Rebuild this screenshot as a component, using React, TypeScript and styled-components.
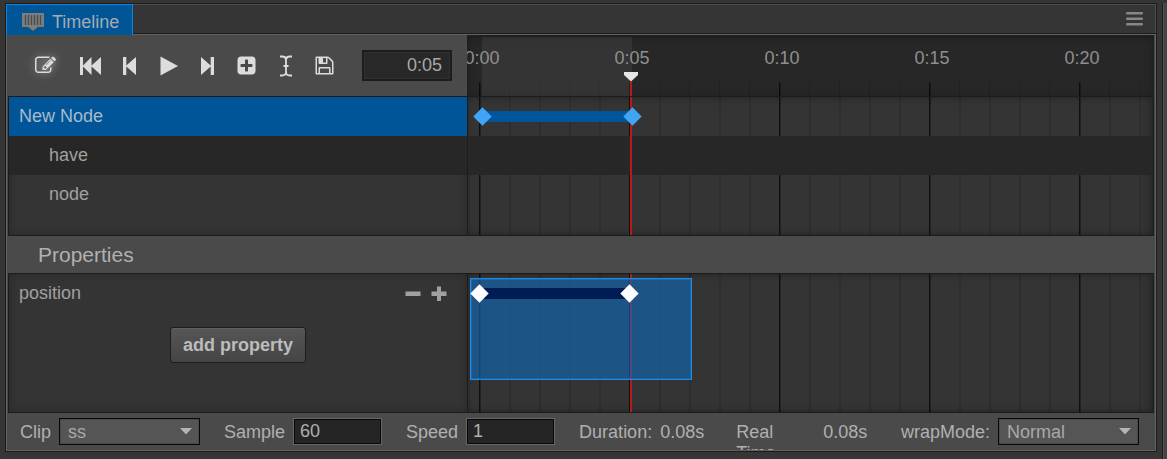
import React from "react";
import styled, { createGlobalStyle, css } from "styled-components";

const FRAME = 30;
const ORIGIN = 12;
const frameX = (frame: number) => ORIGIN + frame * FRAME;

const GlobalStyle = createGlobalStyle`
  * { box-sizing: border-box; }
  body {
    margin: 0;
    background: #353535;
    color: #a9a9a9;
    font-family: "Liberation Sans", Arial, sans-serif;
    font-size: 18px;
    line-height: 21px;
  }
  button, input, select { font: inherit; color: inherit; margin: 0; }
  ul { margin: 0; padding: 0; list-style: none; }
`;

const Shell = styled.div`
  display: flex;
  gap: 5px;
  padding: 3px 0 0 5px;
  min-height: 100vh;
  overflow: hidden;
`;

const Panel = styled.main`
  flex: 1;
  min-width: 0;
  align-self: flex-start;
  border: 1px solid #1c1c1c;
`;

const NeighbourPanel = styled.aside`
  flex: none;
  width: 5px;
  border-left: 1px solid #1c1c1c;
  background: linear-gradient(90deg, #555 1px, #444 1px);
`;

const TabBar = styled.div`
  display: flex;
  height: 30px;
  background: #353535;
  border-bottom: 1px solid #1c1c1c;
  box-shadow: inset 0 1px #4f4f4f, inset -1px 0 #4f4f4f;
`;

const Tab = styled.button`
  display: flex;
  align-items: center;
  gap: 8px;
  height: 31px;
  width: 127px;
  padding: 5px 0 0 15px;
  border: 1px solid #0a84e0;
  border-bottom: 0;
  background: #005596;
  color: #a5abb0;
  z-index: 1;
`;

const MenuButton = styled.button`
  display: flex;
  align-items: center;
  margin-left: auto;
  padding: 1px 13px 0 0;
  border: 0;
  background: none;
  color: #888;
`;

const Body = styled.div`
  border: 1px solid #626262;
  padding: 0 1px;
  background: #4a4a4a;
`;

const Split = styled.div`
  display: grid;
  grid-template-columns: 459px minmax(0, 1fr);
`;

const Toolbar = styled.div`
  display: flex;
  align-items: center;
  padding: 0 15px 0 18px;
  height: 61px;
`;

const ToolButton = styled.button<{ $active?: boolean }>`
  display: flex;
  justify-content: center;
  align-items: center;
  flex: none;
  width: 39px;
  height: 40px;
  padding: 0;
  border: 0;
  background: none;
  color: #dcdcdc;
  ${(p) =>
    p.$active &&
    css`
      margin-right: 6px;
      svg {
        filter: drop-shadow(0 0 4px rgba(255, 255, 255, 0.55));
      }
    `}
`;

const TimeInput = styled.input`
  width: 90px;
  height: 31px;
  margin-left: auto;
  padding: 0 8px;
  border: 2px solid #1d1d1d;
  background: #282828;
  box-shadow: inset 0 0 0 1px #303030;
  text-align: right;
`;

const Ruler = styled.div`
  position: relative;
  overflow: hidden;
  height: 61px;
  background:
    linear-gradient(90deg, #0c0c0c 1px, #1b1b1b 1px, #1b1b1b 2px, transparent 2px) 12px 100% / 150px 14px repeat-x,
    linear-gradient(90deg, #212121 1px, transparent 1px) 12px 100% / 30px 14px repeat-x,
    #272727;
  box-shadow: inset 0 2px 8px rgba(0, 0, 0, 0.35);
`;

const ClipRange = styled.div`
  position: absolute;
  top: 2px;
  bottom: 0;
  background: rgba(80, 80, 80, 0.32);
`;

const RulerLabels = styled.div`
  display: flex;
  margin-left: -60px;
  padding-top: 13px;
  color: #8f8f8f;
`;

const RulerLabel = styled.span`
  position: relative;
  flex: none;
  width: 150px;
  text-align: center;
`;

const Playhead = styled.svg`
  position: absolute;
  top: 37px;
`;

const PlayLine = styled.div`
  position: absolute;
  top: 0;
  bottom: 0;
  width: 2px;
  background: #b81a1a;
`;

const PlayStem = styled(PlayLine)`
  top: 47px;
`;

const Section = styled(Split)`
  border: 1px solid #1c1c1c;
  grid-template-columns: 458px minmax(0, 1fr);
  min-height: 140px;
  background: #343434;
`;

const List = styled.div<{ $inset?: boolean }>`
  padding-top: ${(p) => (p.$inset ? 1 : 0)}px;
  box-shadow: inset 0 0 10px rgba(0, 0, 0, 0.22);
`;

const Row = styled.li<{ $selected?: boolean; $dark?: boolean; $depth?: number }>`
  display: flex;
  align-items: center;
  height: 39px;
  padding: 0 20px 0 ${(p) => 10 + (p.$depth ?? 0) * 30}px;
  color: ${(p) => (p.$selected ? "#a9bac8" : "#a0a0a0")};
  background: ${(p) => (p.$selected ? "#005599" : p.$dark ? "#272727" : "transparent")};
`;

const Tracks = styled.div`
  position: relative;
  overflow: hidden;
  border-left: 1px solid #1c1c1c;
  background:
    linear-gradient(90deg, #101010 1px, #232323 1px, #232323 2px, transparent 2px) 11px 0 / 150px 100% repeat-x,
    linear-gradient(90deg, #2e2e2e 2px, transparent 2px) 11px 0 / 30px 100% repeat-x;
  box-shadow: inset -4px 0 8px rgba(0, 0, 0, 0.2), inset 0 0 5px rgba(0, 0, 0, 0.2);
`;

const Canvas = styled.div<{ $inset?: boolean }>`
  position: absolute;
  inset: 0 0 0 -1px;
  ${(p) => p.$inset && "--track-top: 1px;"}
`;

const TrackRow = styled.div<{ $dark?: boolean }>`
  height: 39px;
  background: ${(p) => (p.$dark ? "#272727" : "transparent")};
`;

const Segment = styled.div<{ $color: string }>`
  position: absolute;
  top: calc(14px + var(--track-top, 0px));
  height: 11px;
  background: ${(p) => p.$color};
`;

const Key = styled.div<{ $color: string }>`
  position: absolute;
  top: calc(13px + var(--track-top, 0px));
  width: 13px;
  height: 13px;
  margin-left: -6px;
  background: ${(p) => p.$color};
  transform: rotate(45deg);
`;

const Selection = styled.div`
  position: absolute;
  left: 3px;
  top: 4px;
  width: 222px;
  height: 102px;
  border: 1px solid #1e8be6;
  background: rgba(16, 104, 184, 0.62);
  box-shadow: inset 0 0 0 1px rgba(30, 139, 230, 0.35);
`;

const SectionTitle = styled.h2`
  margin: 0;
  padding: 1px 30px 0;
  font-size: 21px;
  font-weight: 400;
  line-height: 36px;
  color: #b0b0b0;
`;

const RowActions = styled.span`
  display: flex;
  gap: 10px;
  margin-left: auto;
`;

const SmallButton = styled.button`
  display: flex;
  padding: 0;
  border: 0;
  background: none;
  color: #a0a0a0;
`;

const AddButton = styled.button`
  display: block;
  width: 136px;
  height: 36px;
  margin: 14px auto 0;
  padding: 0;
  border: 1px solid #1c1c1c;
  border-radius: 3px;
  background: linear-gradient(#565656, #454545);
  box-shadow: inset 0 1px #606060;
  color: #bcbcbc;
  font-weight: 700;
`;

const Footer = styled.footer`
  display: flex;
  gap: 24px;
  height: 37px;
  padding: 5px 15px 0 12px;
  overflow: hidden;
  color: #b0b0b0;
`;

const Field = styled.label<{ $end?: boolean }>`
  display: flex;
  gap: 8px;
  flex: none;
  line-height: 21px;
  ${(p) => p.$end && "margin-left: auto;"}
`;

const Caption = styled.span<{ $wide?: boolean }>`
  padding-top: 4px;
  ${(p) => p.$wide && "width: 79px;"}
`;

const Value = styled.output`
  padding-top: 4px;
  min-width: 52px;
`;

const NumberInput = styled.input`
  width: 89px;
  height: 27px;
  padding: 0 6px;
  border: 1px solid #666;
  background: #252525;
  box-shadow: inset 0 0 0 1px #080808;
`;

const SelectBox = styled.span`
  display: grid;
  width: 141px;
  height: 27px;
  align-items: center;
  > * { grid-area: 1 / 1; }
  svg { justify-self: end; margin-right: 8px; pointer-events: none; z-index: 1; }
`;

const Select = styled.select`
  appearance: none;
  width: 100%;
  height: 27px;
  padding: 1px 8px 0;
  border: 1px solid #080808;
  border-radius: 0;
  background: #555;
  box-shadow: inset 0 0 0 1px #4a4a4a;
  color: #a9a9a9;
`;

const Glyph = ({ d }: { d: string }) => (
  <svg width="21" height="21" viewBox="0 0 1792 1792" fill="currentColor" aria-hidden="true">
    <path d={d} />
  </svg>
);

const Shape = ({ w, h = 20, children }: { w: number; h?: number; children: React.ReactNode }) => (
  <svg width={w} height={h} viewBox={`0 0 ${w} ${h}`} fill="currentColor" aria-hidden="true">
    {children}
  </svg>
);

const EDIT =
  "M888 1184l116-116-152-152-116 116v56h96v96h56zm440-720q-16-16-33 1l-350 350q-17 17-1 33t33-1l350-350q17-17 1-33zm80 594v190q0 119-84.5 203.5t-203.5 84.5h-832q-119 0-203.5-84.5t-84.5-203.5v-832q0-119 84.5-203.5t203.5-84.5h832q63 0 117 25 15 7 18 23 3 17-9 29l-49 49q-14 14-32 8-23-6-45-6h-832q-66 0-113 47t-47 113v832q0 66 47 113t113 47h832q66 0 113-47t47-113v-126q0-13 9-22l64-64q15-15 35-7t20 29zm-96-738l288 288-672 672h-288v-288zm444 132l-92 92-288-288 92-92q28-28 68-28t68 28l152 152q28 28 28 68t-28 68z";
const PLUS_BOX =
  "M1408 960v-128q0-26-19-45t-45-19h-320v-320q0-26-19-45t-45-19h-128q-26 0-45 19t-19 45v320h-320q-26 0-45 19t-19 45v128q0 26 19 45t45 19h320v320q0 26 19 45t45 19h128q26 0 45-19t19-45v-320h320q26 0 45-19t19-45zm256-544v960q0 119-84.5 203.5t-203.5 84.5h-960q-119 0-203.5-84.5t-84.5-203.5v-960q0-119 84.5-203.5t203.5-84.5h960q119 0 203.5 84.5t84.5 203.5z";
const FLOPPY =
  "M512 1536h768v-384h-768v384zm896 0h128v-896q0-14-10-38.5t-20-34.5l-281-281q-10-10-34-20t-39-10v416q0 40-28 68t-68 28h-576q-40 0-68-28t-28-68v-416h-128v1280h128v-416q0-40 28-68t68-28h832q40 0 68 28t28 68v416zm-384-928v-320q0-13-9.5-22.5t-22.5-9.5h-192q-13 0-22.5 9.5t-9.5 22.5v320q0 13 9.5 22.5t22.5 9.5h192q13 0 22.5-9.5t9.5-22.5zm640 32v928q0 40-28 68t-68 28h-1344q-40 0-68-28t-28-68v-1344q0-40 28-68t68-28h928q40 0 88 20t76 48l280 280q28 28 48 76t20 88z";

const TimelineIcon = () => (
  <svg width="22" height="20" viewBox="0 0 22 20" aria-hidden="true">
    <path d="M1 2h20v12.500h-5l-5 4-5-4H1z" fill="#35424c" />
    <path d="M0 0h22v14h-6l-5 4-5-4H0z" fill="#7d7d7d" />
    <path d="M3.500 2v10M6.500 2v10M9.500 2v10M12.500 2v10M15.500 2v10M18.500 2v10" stroke="#484c50" strokeWidth="1.300" />
  </svg>
);

const Dropdown = ({ value }: { value: string }) => (
  <SelectBox>
    <Select defaultValue={value}>
      <option>{value}</option>
    </Select>
    <svg width="12" height="7" viewBox="0 0 12 7" aria-hidden="true">
      <path d="M0 0h12L6 6.500z" fill="#b4b4b4" />
    </svg>
  </SelectBox>
);

const KeyTrack = ({ from, to, bar, dot, shift = 0 }: { from: number; to: number; bar: string; dot: string; shift?: number }) => (
  <>
    <Segment $color={bar} style={{ left: frameX(from) + shift, width: (to - from) * FRAME }} />
    <Key $color={dot} style={{ left: frameX(from) + shift }} />
    <Key $color={dot} style={{ left: frameX(to) + shift }} />
  </>
);

const marks = ["0:00", "0:05", "0:10", "0:15", "0:20"];
const current = 5;

export default function App() {
  return (
    <>
      <GlobalStyle />
      <Shell>
        <Panel>
          <TabBar>
            <Tab type="button">
              <TimelineIcon />
              Timeline
            </Tab>
            <MenuButton type="button" aria-label="Panel menu">
              <Shape w={17} h={14}>
                <path d="M1 0h15q1 0 1 1.300t-1 1.300H1q-1 0-1-1.300T1 0zM1 5.500h15q1 0 1 1.300t-1 1.300H1q-1 0-1-1.300t1-1.300zM1 11h15q1 0 1 1.300t-1 1.300H1q-1 0-1-1.300T1 11z" />
              </Shape>
            </MenuButton>
          </TabBar>
          <Body>
            <Split>
              <Toolbar>
                <ToolButton type="button" aria-label="Edit mode" $active>
                  <Glyph d={EDIT} />
                </ToolButton>
                <ToolButton type="button" aria-label="First frame">
                  <Shape w={24}>
                    <path d="M1 1h3v8.500L12.500 1v8.500L22 1v18l-9.500-8.500V19L4 10.500V19H1z" />
                  </Shape>
                </ToolButton>
                <ToolButton type="button" aria-label="Previous frame">
                  <Shape w={13}>
                    <path d="M0 1h3.300v8.500L13 1v18l-9.700-8.500V19H0z" />
                  </Shape>
                </ToolButton>
                <ToolButton type="button" aria-label="Play">
                  <Shape w={18}>
                    <path d="M0.500 0.500L18 10 0.500 19.500z" />
                  </Shape>
                </ToolButton>
                <ToolButton type="button" aria-label="Next frame">
                  <Shape w={13}>
                    <path d="M13 1H9.700v8.500L0 1v18l9.700-8.500V19H13z" />
                  </Shape>
                </ToolButton>
                <ToolButton type="button" aria-label="Insert key">
                  <Glyph d={PLUS_BOX} />
                </ToolButton>
                <ToolButton type="button" aria-label="Add event">
                  <Shape w={14} h={22}>
                    <path
                      d="M1 1.500h2q4 0 4 3.500v12q0 3.500-4 3.500H1M13 1.500h-2q-4 0-4 3.500v12q0 3.500 4 3.500h2M4.500 11h5"
                      fill="none"
                      stroke="currentColor"
                      strokeWidth="1.800"
                    />
                  </Shape>
                </ToolButton>
                <ToolButton type="button" aria-label="Save">
                  <Glyph d={FLOPPY} />
                </ToolButton>
                <TimeInput aria-label="Current time" defaultValue="0:05" />
              </Toolbar>
              <Ruler>
                <ClipRange style={{ left: frameX(0) + 3, width: current * FRAME }} />
                <RulerLabels>
                  {marks.map((m) => (
                    <RulerLabel key={m}>{m}</RulerLabel>
                  ))}
                </RulerLabels>
                <PlayStem style={{ left: frameX(current) + 1 }} />
                <Playhead width="14" height="10" viewBox="0 0 14 10" style={{ left: frameX(current) - 5 }}>
                  <path d="M0 0h14v3L7 9.500 0 3z" fill="#e6e6e6" />
                </Playhead>
              </Ruler>
            </Split>
            <Section>
              <List>
                <ul>
                  <Row $selected>New Node</Row>
                  <Row $dark $depth={1}>have</Row>
                  <Row $depth={1}>node</Row>
                </ul>
              </List>
              <Tracks>
                <TrackRow />
                <TrackRow $dark />
                <Canvas>
                  <PlayLine style={{ left: frameX(current) + 1 }} />
                  <KeyTrack from={0} to={5} bar="#00569c" dot="#41a5f5" shift={3} />
                </Canvas>
              </Tracks>
            </Section>
            <SectionTitle>Properties</SectionTitle>
            <Section>
              <List>
                <ul>
                  <Row>
                    position
                    <RowActions>
                      <SmallButton type="button" aria-label="Remove position">
                        <Shape w={16} h={16}>
                          <path d="M0.500 5.500h15v4.500h-15z" />
                        </Shape>
                      </SmallButton>
                      <SmallButton type="button" aria-label="Add position key">
                        <Shape w={16} h={16}>
                          <path d="M6 0.500h4v5h5.500v4.500H10v5H6v-5H0.500V5.500H6z" />
                        </Shape>
                      </SmallButton>
                    </RowActions>
                  </Row>
                </ul>
                <AddButton type="button">add property</AddButton>
              </List>
              <Tracks>
                <Canvas>
                  <PlayLine style={{ left: frameX(current) + 1 }} />
                  <Selection />
                  <KeyTrack from={0} to={5} bar="#001c54" dot="#ffffff" />
                </Canvas>
              </Tracks>
            </Section>
            <Footer>
              <Field>
                <Caption>Clip</Caption>
                <Dropdown value="ss" />
              </Field>
              <Field>
                <Caption>Sample</Caption>
                <NumberInput defaultValue="60" />
              </Field>
              <Field>
                <Caption>Speed</Caption>
                <NumberInput defaultValue="1" />
              </Field>
              <Field>
                <Caption>Duration:</Caption>
                <Value>0.08s</Value>
              </Field>
              <Field>
                <Caption $wide>Real Time</Caption>
                <Value>0.08s</Value>
              </Field>
              <Field $end>
                <Caption>wrapMode:</Caption>
                <Dropdown value="Normal" />
              </Field>
            </Footer>
          </Body>
        </Panel>
        <NeighbourPanel />
      </Shell>
    </>
  );
}
